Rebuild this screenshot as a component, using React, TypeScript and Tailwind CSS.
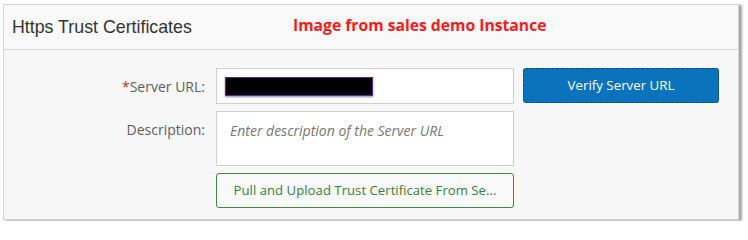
export default function App() {
  return (
    <div className="h-[221px] w-[748px] bg-white pl-[3px] pr-[9px] pt-[4px] font-['Open_Sans',sans-serif]">
      <div className="h-[216px] border border-[#d4d4d4] bg-[#f7f7f7] shadow-[3px_1px_2px_rgba(0,0,0,0.35)]">
        {/* Header */}
        <div className="relative flex h-[45px] items-center border-b border-[#d9d9d9] bg-[#f9f9f9] pl-[8px]">
          <h1 className="font-['Liberation_Sans',sans-serif] text-[17.8px] text-[#333]">Https Trust Certificates</h1>
          <span className="absolute left-[289px] top-[9px] text-[15.7px] font-bold text-[#ff1a1a]">
            Image from sales demo Instance
          </span>
        </div>

        {/* Form */}
        <div className="grid grid-cols-[203px_298px_auto] gap-x-[9px] gap-y-[7px] pt-[18px] text-[14px] text-[#5e5e5e]">
          <label className="flex h-[36px] items-center justify-end pr-[2px]">
            <span className="text-[#c4302b]">*</span>Server URL:
          </label>
          <div className="flex h-[36px] items-center border border-[#cfcfcf] bg-white pl-[8px]">
            <div className="h-[19px] w-[148px] border border-[#5b2a86] bg-black shadow-[0_1px_2px_rgba(80,40,120,0.6)]" />
          </div>
          <button className="h-[35px] w-[196px] rounded-[3px] border border-dashed border-[#0a4f80] bg-[#0b73bb] text-[13.3px] text-white">
            Verify Server URL
          </button>

          <label className="flex h-[36px] items-center justify-end pr-[2px]">Description:</label>
          <textarea
            className="h-[55px] resize-none border border-[#cfcfcf] bg-white px-[13px] pt-[8px] text-[14px] italic outline-none placeholder:text-[#777]"
            placeholder="Enter description of the Server URL"
          />
          <div />

          <div />
          <button className="h-[35px] w-[298px] whitespace-nowrap rounded-[3px] border border-[#3b8a3e] bg-[#f9f9f9] text-[13.2px] text-[#38803c]">
            Pull and Upload Trust Certificate From Se...
          </button>
          <div />
        </div>
      </div>
    </div>
  );
}
